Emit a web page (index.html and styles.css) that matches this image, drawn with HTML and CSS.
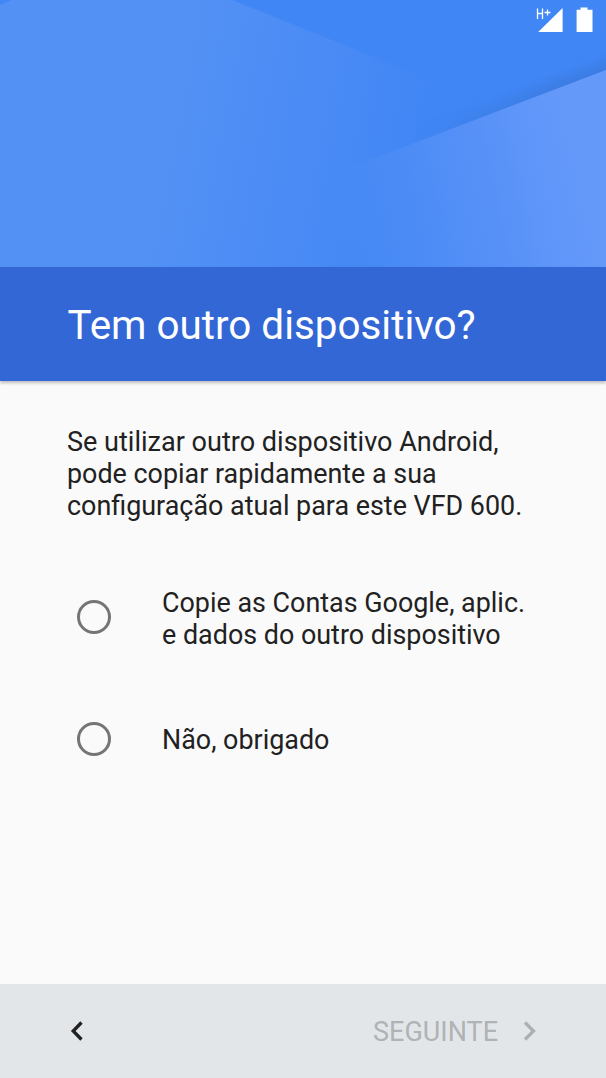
FILE: index.html
```html
<!DOCTYPE html>
<html lang="pt">
<head>
    <meta charset="UTF-8">
    <meta name="viewport" content="width=device-width, initial-scale=1.0">
    <title>Tem outro dispositivo?</title>
    <link rel="stylesheet" href="styles.css">
</head>
<body>

    <div class="screen">
        <header class="hero">
            <svg class="hero-art" viewBox="0 0 606 267" preserveAspectRatio="none">
                <defs>
                    <linearGradient id="leftPanel" gradientUnits="userSpaceOnUse" x1="190" y1="0" x2="450" y2="50">
                        <stop offset="0" stop-color="#5391f4"/>
                        <stop offset="0.5" stop-color="#4b8bf5"/>
                        <stop offset="1" stop-color="#4086f5"/>
                    </linearGradient>
                    <linearGradient id="rightPanel" gradientUnits="userSpaceOnUse" x1="320" y1="200" x2="570" y2="145">
                        <stop offset="0" stop-color="#488af5" stop-opacity="0"/>
                        <stop offset="0.25" stop-color="#498af5"/>
                        <stop offset="0.6" stop-color="#5590f7"/>
                        <stop offset="1" stop-color="#6499fa"/>
                    </linearGradient>
                    <linearGradient id="edgeShadow" gradientUnits="userSpaceOnUse" x1="500" y1="111" x2="494" y2="95">
                        <stop offset="0" stop-color="#3b7ade"/>
                        <stop offset="1" stop-color="#3b7ade" stop-opacity="0"/>
                    </linearGradient>
                    <linearGradient id="shadowFade" x1="0" y1="0" x2="1" y2="0">
                        <stop offset="0.25" stop-color="#000"/>
                        <stop offset="0.8" stop-color="#ddd"/>
                    </linearGradient>
                    <mask id="shadowMask" maskUnits="userSpaceOnUse" x="350" y="0" width="256" height="267">
                        <rect x="350" y="0" width="256" height="267" fill="url(#shadowFade)"/>
                    </mask>
                </defs>
                <rect width="606" height="267" fill="#4086f5"/>
                <path d="M0 5 11 0H232L606 150V267H0z" fill="url(#leftPanel)"/>
                <path d="M340 173 606 70V45L340 148z" fill="url(#edgeShadow)" mask="url(#shadowMask)"/>
                <path d="M300 186 404 147 606 70V267H300z" fill="url(#rightPanel)"/>
            </svg>
            <div class="status-bar">
                <svg width="28" height="26" viewBox="0 0 28 26" fill="none">
                    <path d="M1.500 2.500v10.500M6.500 2.500v10.500M1.500 7.500h5M8.500 6.500h6M11.500 3.500v6" stroke="#fff" stroke-width="1.300"/>
                    <path d="M26.600 2v24H2.200z" fill="#fff"/>
                </svg>
                <svg width="17" height="26" viewBox="0 0 17 26">
                    <path d="M4.500 1.500h7v2.300h5V26H.6V3.800h3.900z" fill="#fff"/>
                </svg>
            </div>
        </header>

        <div class="title-bar">
            <h1>Tem outro dispositivo?</h1>
        </div>

        <main class="content">
            <p class="intro">Se utilizar outro dispositivo Android,<br>pode copiar rapidamente a sua<br>configuração atual para este VFD 600.</p>

            <div class="options">
                <label class="option">
                    <input type="radio" name="setup">
                    <span>Copie as Contas Google, aplic.<br>e dados do outro dispositivo</span>
                </label>
                <label class="option">
                    <input type="radio" name="setup">
                    <span>Não, obrigado</span>
                </label>
            </div>
        </main>

        <footer class="nav-bar">
            <button class="back" aria-label="Anterior">
                <svg width="14" height="22" viewBox="0 0 14 22" fill="none">
                    <path d="M11.500 2.500 3.200 11l8.300 8.500" stroke="#212121" stroke-width="3.300"/>
                </svg>
            </button>
            <button class="next" disabled>
                <span>SEGUINTE</span>
                <svg width="14" height="22" viewBox="0 0 14 22" fill="none">
                    <path d="M2 2.500l8.500 8.500-8.500 8.500" stroke="#adb0b2" stroke-width="3.300"/>
                </svg>
            </button>
        </footer>
    </div>

</body>
</html>
```

FILE: styles.css
```css
* {
    box-sizing: border-box;
}

body {
    margin: 0;
    font-family: Roboto, sans-serif;
    color: #212121;
    background-color: #fafafa;
}

.screen {
    display: flex;
    flex-direction: column;
    height: 1078px;
}

.hero {
    display: grid;
    height: 267px;
    flex-shrink: 0;
}

.hero-art,
.status-bar {
    grid-area: 1 / 1;
}

.hero-art {
    width: 100%;
    height: 267px;
}

.status-bar {
    display: flex;
    justify-content: flex-end;
    align-items: flex-start;
    gap: 12px;
    padding: 6px 13px 0 0;
    z-index: 1;
}

.title-bar {
    display: flex;
    align-items: center;
    height: 114px;
    padding: 4px 67.5px 0;
    flex-shrink: 0;
    background-color: #3367d6;
    box-shadow: 0 2px 3px rgba(0, 0, 0, 0.25);
}

.title-bar h1 {
    margin: 0;
    font-size: 40.4px;
    font-weight: 400;
    line-height: 48px;
    color: #fff;
    white-space: nowrap;
}

.content {
    flex: 1;
    padding: 45px 67px 0;
    font-size: 26.9px;
    line-height: 32px;
    white-space: nowrap;
}

.intro {
    margin: 0;
}

.intro::first-line {
    font-size: 27.05px;
}

.options {
    display: flex;
    flex-direction: column;
    gap: 28px;
    margin-top: 48px;
}

.option {
    display: flex;
    align-items: center;
    gap: 51px;
    min-height: 94px;
    padding-left: 10px;
}

.option input {
    appearance: none;
    width: 34px;
    height: 34px;
    margin: 0;
    border: 3px solid #757575;
    border-radius: 50%;
}

.option span {
    padding-top: 3px;
}

.option:last-child span {
    padding-top: 1px;
}

.nav-bar {
    display: flex;
    justify-content: space-between;
    align-items: center;
    height: 94px;
    padding: 0 69px 0 70px;
    flex-shrink: 0;
    background-color: #e2e6e9;
}

.nav-bar button {
    display: flex;
    align-items: center;
    padding: 0;
    border: none;
    background: none;
    font-family: inherit;
    font-size: 27px;
}

.nav-bar .next {
    gap: 25px;
    color: #b0b3b4;
}

.nav-bar .next span {
    padding-top: 2px;
}
```
